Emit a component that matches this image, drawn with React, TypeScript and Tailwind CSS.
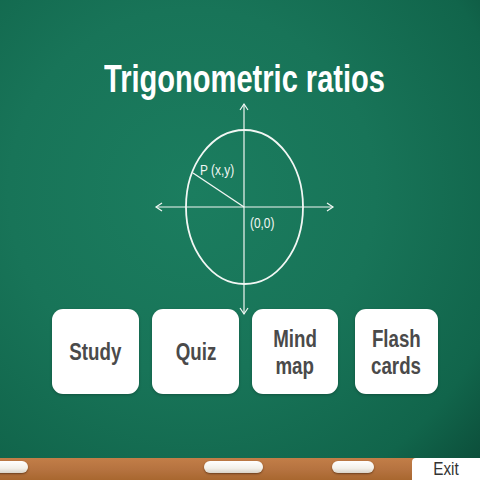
import React from "react";

const font = "font-['Liberation_Sans',Arial,sans-serif]";

const Diagram = () => (
  <svg
    width="480"
    height="209"
    viewBox="0 100 480 209"
    className="block overflow-visible"
    fill="none"
    stroke="#f2f7f4"
  >
    {/* axes */}
    <line x1="244" y1="104" x2="244" y2="314" strokeWidth="1.2" />
    <line x1="156" y1="207" x2="333" y2="207" strokeWidth="1.2" />
    <polyline points="240,110 244,104 248,110" strokeWidth="1.2" />
    <polyline points="240,308 244,314 248,308" strokeWidth="1.2" />
    <polyline points="162,203 156,207 162,211" strokeWidth="1.2" />
    <polyline points="327,203 333,207 327,211" strokeWidth="1.2" />
    {/* circle */}
    <ellipse cx="244.5" cy="207" rx="58.5" ry="77" strokeWidth="1.8" />
    {/* radius to P */}
    <line x1="193" y1="173" x2="244" y2="207" strokeWidth="1.3" />
    <text
      x="200"
      y="175"
      fill="#f2f7f4"
      stroke="none"
      fontSize="14"
      fontFamily="Liberation Sans, Arial, sans-serif"
      transform="translate(200 0) scale(0.85 1) translate(-200 0)"
    >
      P (x,y)
    </text>
    <text
      x="250"
      y="228"
      fill="#f2f7f4"
      stroke="none"
      fontSize="14"
      fontFamily="Liberation Sans, Arial, sans-serif"
      transform="translate(250 0) scale(0.85 1) translate(-250 0)"
    >
      (0,0)
    </text>
  </svg>
);

const Tile = ({ lines, className }: { lines: string[]; className: string }) => (
  <button
    className={`h-[85px] rounded-[11px] bg-white shadow-[0_1px_3px_rgba(0,0,0,0.25)] flex flex-col items-center justify-center ${className}`}
  >
    {lines.map((l) => (
      <span
        key={l}
        className={`${font} inline-block scale-x-[0.78] text-[24px] leading-[27px] font-bold text-[#4a4a4a]`}
      >
        {l}
      </span>
    ))}
  </button>
);

const Eraser = ({ className }: { className: string }) => (
  <div
    className={`h-[12px] mt-[3px] rounded-full bg-[linear-gradient(to_bottom,#ffffff,#f3f0ea_60%,#d9d3c8)] shadow-[0_1px_2px_rgba(60,30,10,0.6)] ${className}`}
  />
);

export default function App() {
  return (
    <div className="w-[480px] h-[480px] overflow-hidden flex flex-col bg-[radial-gradient(ellipse_at_40%_40%,#1b7d5f_0%,#187458_45%,#11654b_80%,#0b4a37_100%)]">
      <div className="h-[59px]" />
      <div className="h-[39px] flex justify-center pl-[9px]">
        <h1
          className={`${font} inline-block scale-x-[0.745] text-[39px] leading-[39px] font-bold text-white whitespace-nowrap`}
        >
          Trigonometric ratios
        </h1>
      </div>
      <div className="mt-[2px]">
        <Diagram />
      </div>
      <div className="flex pl-[52px]">
        <Tile lines={["Study"]} className="w-[87px]" />
        <Tile lines={["Quiz"]} className="w-[87px] ml-[13px]" />
        <Tile lines={["Mind", "map"]} className="w-[86px] ml-[13px]" />
        <Tile lines={["Flash", "cards"]} className="w-[83px] ml-[17px]" />
      </div>
      <div className="flex-1" />
      <div className="h-[22px] flex items-start bg-[linear-gradient(to_bottom,#c27e48,#b5723f_55%,#a8672f)]">
        <Eraser className="w-[34px] -ml-[6px]" />
        <Eraser className="w-[59px] ml-[176px]" />
        <Eraser className="w-[42px] ml-[69px]" />
        <button className="ml-auto w-[68px] h-full bg-white rounded-tl-[4px] flex items-center justify-center">
          <span className={`${font} inline-block scale-x-[0.85] text-[18px] leading-none text-[#333]`}>
            Exit
          </span>
        </button>
      </div>
    </div>
  );
}
